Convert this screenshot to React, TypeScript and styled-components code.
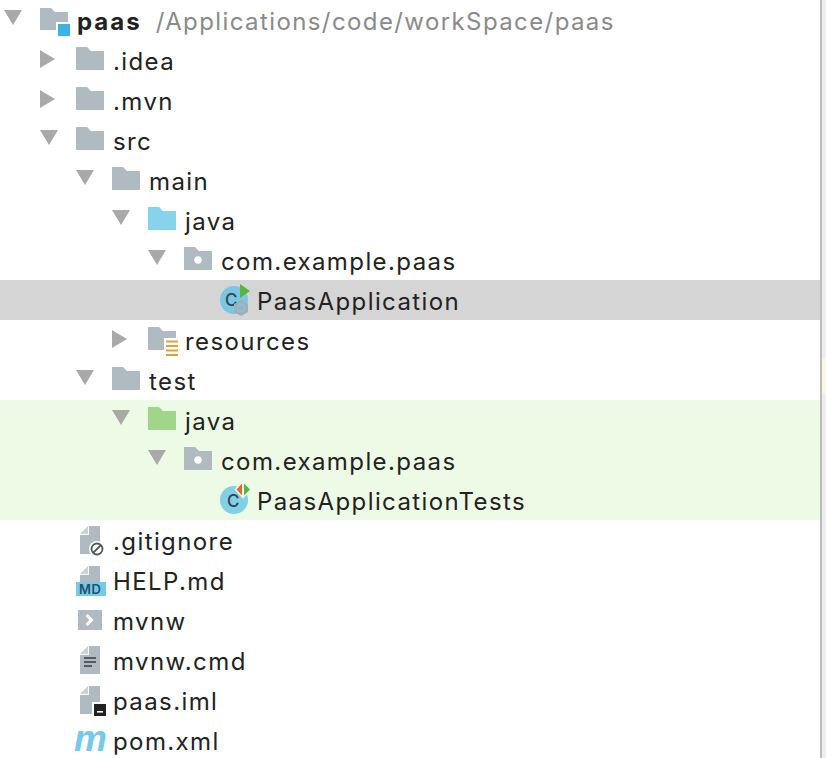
import React from "react";
import styled, { createGlobalStyle } from "styled-components";

const GlobalStyle = createGlobalStyle`
  html, body {
    margin: 0;
    padding: 0;
    background: #fff;
    overflow: hidden;
  }
`;

const Panel = styled.div`
  display: flex;
  width: 826px;
  height: 758px;
  overflow: hidden;
`;

const Tree = styled.div`
  flex: 1;
  min-width: 0;
  font-family: Inter, "Liberation Sans", sans-serif;
  font-size: 24px;
  letter-spacing: 1.4px;
  color: #222;
`;

const Scrollbar = styled.div`
  position: relative;
  flex: none;
  width: 4px;
  border-left: 2px solid #bcbcbc;
  background: #eeeeee;
`;

const ScrollMark = styled.div`
  position: absolute;
  top: 358px;
  left: 0;
  right: 0;
  height: 36px;
  background: #fdf7df;
`;

const Row = styled.div<{ $level: number; $tone?: "selected" | "test" }>`
  display: flex;
  align-items: center;
  height: 40px;
  padding-left: ${(p) => p.$level * 36 + 4}px;
  background: ${(p) =>
    p.$tone === "selected" ? "#d5d5d5" : p.$tone === "test" ? "#edfbe6" : "#fff"};
`;

const ArrowSlot = styled.div`
  flex: none;
  width: 36px;
  height: 40px;
`;

const IconSlot = styled.div`
  flex: none;
  width: 37px;
  height: 40px;
`;

const Label = styled.span<{ $bold?: boolean }>`
  padding-top: 2px;
  font-weight: ${(p) => (p.$bold ? 700 : 400)};
  letter-spacing: ${(p) => (p.$bold ? "2px" : "inherit")};
  white-space: nowrap;
`;

const Path = styled.span`
  padding-top: 2px;
  margin-left: 14px;
  color: #8a8a8a;
  white-space: nowrap;
`;

const IconSvg = styled.svg`
  display: block;
  overflow: visible;
`;

const GREY = "#afbac1";

const Svg = ({ children }: { children: React.ReactNode }): JSX.Element => (
  <IconSvg width="37" height="40" viewBox="0 0 37 40">
    {children}
  </IconSvg>
);

const Arrow = ({ open }: { open: boolean }): JSX.Element => (
  <IconSvg width="36" height="40" viewBox="0 0 36 40">
    <path d={open ? "M0 10H18L9 25Z" : "M0 10L15 19L0 28Z"} fill="#aaa9aa" />
  </IconSvg>
);

const folderPath = "M0 7H11L15 11H28V30H0Z";
const filePath = "M13 6H24V34H4V15H13Z";
const foldPath = "M4 14L12 6V14Z";

const Folder = ({ color = GREY }: { color?: string }): JSX.Element => (
  <Svg>
    <path d={folderPath} fill={color} />
  </Svg>
);

const icons: Record<string, JSX.Element> = {
  module: (
    <Svg>
      <path d="M0 8H11L15 12H28V30H0Z" fill={GREY} />
      <rect x="16" y="22" width="14" height="16" fill="#fff" />
      <rect x="18" y="24" width="12" height="12" fill="#3db3e2" />
    </Svg>
  ),
  folder: <Folder />,
  source: <Folder color="#87d3ec" />,
  testSource: <Folder color="#9fd68a" />,
  pkg: (
    <Svg>
      <path d={folderPath} fill={GREY} />
      <circle cx="14" cy="20" r="3.8" fill="#fff" />
    </Svg>
  ),
  resources: (
    <Svg>
      <path d={folderPath} fill={GREY} />
      <rect x="16" y="18" width="14" height="18" fill="#fff" />
      <path d="M18 21.5H30M18 26H30M18 30.5H30M18 35H30" stroke="#dba33c" strokeWidth="2" />
    </Svg>
  ),
  appClass: (
    <Svg>
      <circle cx="14" cy="20" r="14" fill="#79c7e3" />
      <text x="12" y="26" textAnchor="middle" fontSize="17" fontWeight="500" fill="#35424a" fontFamily="Inter, sans-serif">
        C
      </text>
      <path d="M20 4L30 11L20 18Z" fill="#59b33c" />
      <path d="M21 20L28 24V32L21 36L14 32V24Z" fill="#a3adb5" />
      <circle cx="21" cy="28" r="3.6" fill="none" stroke="#79c7e3" strokeWidth="1.6" />
    </Svg>
  ),
  testClass: (
    <Svg>
      <circle cx="14" cy="20" r="14" fill="#80d0e6" />
      <text x="14" y="26.5" textAnchor="middle" fontSize="17" fontWeight="500" fill="#35424a" fontFamily="Inter, sans-serif">
        C
      </text>
      <path d="M22 3.5L16.5 9.5L22 15.5ZM24 3.5L30 9.5L24 15.5Z" fill="#edfbe6" stroke="#edfbe6" strokeWidth="3" />
      <path d="M22 3.5L16.5 9.5L22 15.5Z" fill="#e9662c" />
      <path d="M24 3.5L30 9.5L24 15.5Z" fill="#59b33c" />
    </Svg>
  ),
  ignored: (
    <Svg>
      <path d={filePath} fill={GREY} />
      <path d={foldPath} fill="#c9d2d7" />
      <circle cx="21" cy="29" r="8" fill="#fff" />
      <circle cx="21" cy="29" r="5.5" fill="none" stroke="#55595c" strokeWidth="1.8" />
      <path d="M17 33L25 25" stroke="#55595c" strokeWidth="1.8" />
    </Svg>
  ),
  markdown: (
    <Svg>
      <path d="M13 6H24V24H4V15H13Z" fill={GREY} />
      <path d={foldPath} fill="#c9d2d7" />
      <rect x="0" y="22" width="30" height="14" fill="#76c9e8" />
      <text x="3" y="34" fontSize="13" fontWeight="600" letterSpacing="0.5" fill="#24506a" fontFamily="Inter, sans-serif">
        MD
      </text>
    </Svg>
  ),
  shell: (
    <Svg>
      <rect x="2" y="10" width="24" height="20" fill={GREY} />
      <path d="M10.5 15L15.5 20L10.5 25" fill="none" stroke="#fff" strokeWidth="3" />
    </Svg>
  ),
  text: (
    <Svg>
      <path d={filePath} fill={GREY} />
      <path d={foldPath} fill="#c9d2d7" />
      <path d="M8 18H20M8 22H20M8 26H16" stroke="#555b60" strokeWidth="2" />
    </Svg>
  ),
  iml: (
    <Svg>
      <path d={filePath} fill={GREY} />
      <path d={foldPath} fill="#c9d2d7" />
      <rect x="16" y="22" width="16" height="16" fill="#fff" />
      <rect x="18" y="24" width="12" height="12" fill="#222" />
      <rect x="21" y="31" width="6" height="1.6" fill="#fff" />
    </Svg>
  ),
  maven: (
    <Svg>
      <text x="-2" y="31" fontSize="37" fontWeight="700" fontStyle="italic" fill="#76c9e8" fontFamily="'Liberation Sans', sans-serif">
        m
      </text>
    </Svg>
  ),
};

type Node = {
  level: number;
  label: string;
  icon: string;
  open?: boolean;
  tone?: "selected" | "test";
  path?: string;
  bold?: boolean;
};

const nodes: Node[] = [
  { level: 0, label: "paas", icon: "module", open: true, bold: true, path: "/Applications/code/workSpace/paas" },
  { level: 1, label: ".idea", icon: "folder", open: false },
  { level: 1, label: ".mvn", icon: "folder", open: false },
  { level: 1, label: "src", icon: "folder", open: true },
  { level: 2, label: "main", icon: "folder", open: true },
  { level: 3, label: "java", icon: "source", open: true },
  { level: 4, label: "com.example.paas", icon: "pkg", open: true },
  { level: 5, label: "PaasApplication", icon: "appClass", tone: "selected" },
  { level: 3, label: "resources", icon: "resources", open: false },
  { level: 2, label: "test", icon: "folder", open: true },
  { level: 3, label: "java", icon: "testSource", open: true, tone: "test" },
  { level: 4, label: "com.example.paas", icon: "pkg", open: true, tone: "test" },
  { level: 5, label: "PaasApplicationTests", icon: "testClass", tone: "test" },
  { level: 1, label: ".gitignore", icon: "ignored" },
  { level: 1, label: "HELP.md", icon: "markdown" },
  { level: 1, label: "mvnw", icon: "shell" },
  { level: 1, label: "mvnw.cmd", icon: "text" },
  { level: 1, label: "paas.iml", icon: "iml" },
  { level: 1, label: "pom.xml", icon: "maven" },
];

const App = (): JSX.Element => (
  <>
    <GlobalStyle />
    <Panel>
      <Tree>
        {nodes.map((node, i) => (
          <Row key={i} $level={node.level} $tone={node.tone}>
            <ArrowSlot>{node.open !== undefined && <Arrow open={node.open} />}</ArrowSlot>
            <IconSlot>{icons[node.icon]}</IconSlot>
            <Label $bold={node.bold}>{node.label}</Label>
            {node.path && <Path>{node.path}</Path>}
          </Row>
        ))}
      </Tree>
      <Scrollbar>
        <ScrollMark />
      </Scrollbar>
    </Panel>
  </>
);

export default App;
